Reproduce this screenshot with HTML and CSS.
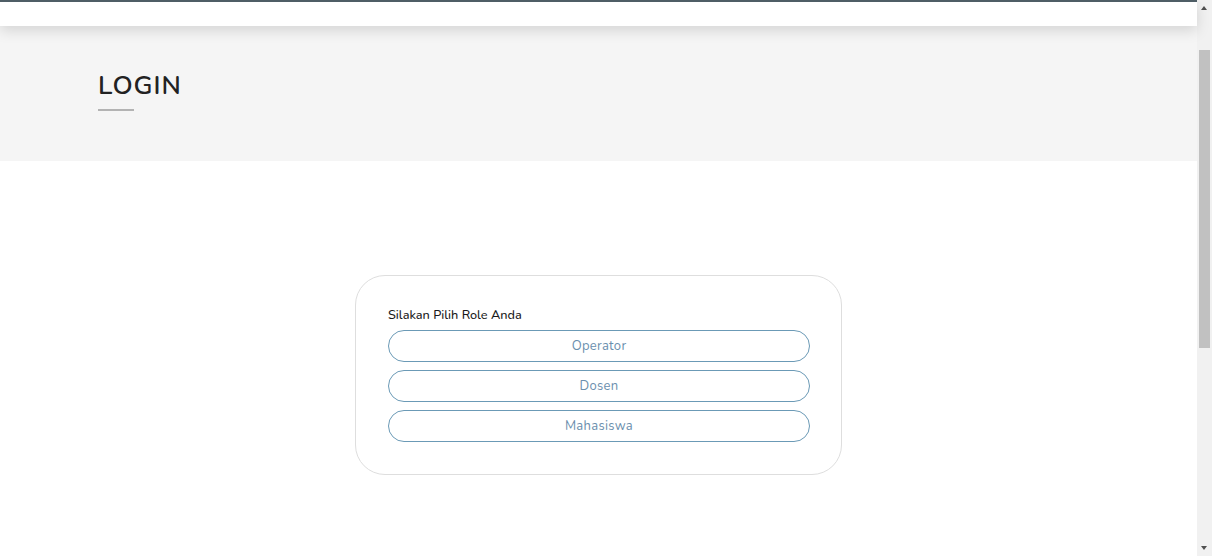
FILE: index.html
```html
<!DOCTYPE html>
<html lang="id">
<head>
<meta charset="utf-8">
<title>Login</title>
<link rel="stylesheet" href="styles.css">
</head>
<body>
<div class="page">
  <header class="topbar"></header>
  <section class="title-band">
    <div class="title-inner">
      <h1 class="title">LOGIN</h1>
      <div class="title-rule"></div>
    </div>
  </section>
  <main class="content">
    <div class="card">
      <p class="card-label">Silakan Pilih Role Anda</p>
      <div class="roles">
        <button class="role-btn">Operator</button>
        <button class="role-btn">Dosen</button>
        <button class="role-btn">Mahasiswa</button>
      </div>
    </div>
  </main>
</div>
<div class="scrollbar">
  <div class="sb-arrow sb-up"></div>
  <div class="sb-track"><div class="sb-thumb"></div></div>
  <div class="sb-arrow sb-down"></div>
</div>
</body>
</html>
```
FILE: styles.css
```css
html, body {
  margin: 0;
  padding: 0;
  height: 100%;
  overflow: hidden;
  background: #ffffff;
  font-family: "Nunito", "Lato", "Noto Sans", sans-serif;
}
.page {
  width: 1197px;
  height: 556px;
  display: flex;
  flex-direction: column;
}
.topbar {
  height: 24px;
  border-top: 2px solid #4f5e66;
  background: #ffffff;
  box-shadow: 0 5px 14px rgba(0, 0, 0, 0.13);
  position: relative;
  z-index: 2;
  flex: none;
}
.title-band {
  height: 135px;
  background: #f5f5f5;
  flex: none;
  padding-left: 98px;
  box-sizing: border-box;
  padding-top: 43px;
}
.title {
  margin: 0;
  font-size: 26px;
  font-weight: 600;
  letter-spacing: 1px;
  color: #222222;
  line-height: 34px;
}
.title-rule {
  width: 36px;
  height: 2px;
  background: #b3b3b3;
  margin-top: 6px;
}
.content {
  flex: 1;
  display: flex;
  justify-content: center;
  padding-top: 114px;
}
.card {
  width: 487px;
  height: 200px;
  box-sizing: border-box;
  border: 1px solid #dedede;
  border-radius: 30px;
  padding: 30px 32px 0 32px;
  background: #ffffff;
}
.card-label {
  margin: 0 0 6px 0;
  font-size: 12.7px;
  font-weight: 500;
  color: #1a1a1a;
  line-height: 18px;
}
.roles {
  display: flex;
  flex-direction: column;
  gap: 8px;
}
.role-btn {
  width: 422px;
  height: 32px;
  border: 1px solid #6b9ab6;
  border-radius: 16px;
  background: #ffffff;
  color: #6b8fae;
  font-family: inherit;
  font-size: 13px;
  letter-spacing: 0.3px;
  padding: 0;
  cursor: pointer;
}
.scrollbar {
  position: fixed;
  top: 0;
  right: 0;
  width: 15px;
  height: 556px;
  background: #f1f1f1;
  display: flex;
  flex-direction: column;
}
.sb-arrow {
  height: 17px;
  flex: none;
  position: relative;
}
.sb-arrow::after {
  content: "";
  position: absolute;
  left: 4px;
  width: 0;
  height: 0;
  border-left: 3.5px solid transparent;
  border-right: 3.5px solid transparent;
}
.sb-up::after {
  top: 6px;
  border-bottom: 4px solid #505050;
}
.sb-down::after {
  top: 7px;
  border-top: 4px solid #505050;
}
.sb-track {
  flex: 1;
  padding: 33px 2px 0 2px;
}
.sb-thumb {
  height: 298px;
  background: #c1c1c1;
}
```
